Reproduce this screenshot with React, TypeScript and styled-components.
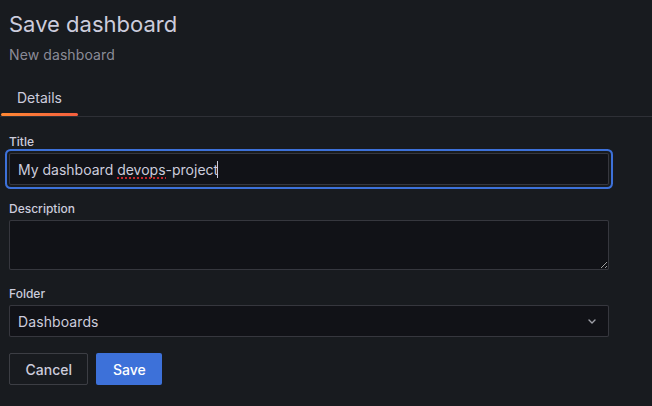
import React from "react";
import styled, { createGlobalStyle } from "styled-components";

const GlobalStyle = createGlobalStyle`
  html, body {
    margin: 0;
    padding: 0;
    background: #181b1f;
  }
  body {
    font-family: Inter, "Noto Sans", "Liberation Sans", sans-serif;
    color: #ccccdc;
    -webkit-font-smoothing: antialiased;
  }
  * { box-sizing: border-box; }
`;

const Page = styled.div`
  width: 652px;
  height: 406px;
  background: #181b1f;
  overflow: hidden;
`;

const Header = styled.header`
  padding: 10px 9px 0 9px;
`;

const Title = styled.h3`
  margin: 0;
  font-size: 22px;
  line-height: 29px;
  font-weight: 400;
  color: #ccccdc;
`;

const Subtitle = styled.div`
  margin-top: 5px;
  font-size: 14px;
  line-height: 21px;
  letter-spacing: 0.1px;
  color: rgba(204, 204, 220, 0.65);
`;

const TabBar = styled.div`
  margin-top: 12px;
  display: flex;
  padding-left: 1px;
  height: 40px;
  border-bottom: 1px solid rgba(204, 204, 220, 0.12);
`;

const Tab = styled.div<{ $active?: boolean }>`
  position: relative;
  padding: 3px 16px 0 16px;
  display: flex;
  align-items: center;
  font-size: 14px;
  line-height: 20px;
  color: ${(p) => (p.$active ? "#ccccdc" : "rgba(204, 204, 220, 0.65)")};

  &::after {
    content: "";
    display: ${(p) => (p.$active ? "block" : "none")};
    position: absolute;
    left: 0;
    right: 0;
    bottom: 0;
    height: 3px;
    border-radius: 2px;
    background: linear-gradient(90deg, #ff8833 0%, #f55f3e 100%);
  }
`;

const Form = styled.form`
  padding: 17px 9px 0 9px;
  width: 618px;
`;

const Field = styled.div`
  margin-bottom: 16px;
`;

const Label = styled.label`
  display: block;
  font-size: 12px;
  line-height: 15px;
  font-weight: 500;
  color: #ccccdc;
  margin-bottom: 4px;
`;

const InputWrap = styled.div`
  position: relative;
  width: 600px;
`;

const TextInput = styled.input<{ $focused?: boolean }>`
  display: block;
  width: 600px;
  height: 32px;
  padding: 0 8px;
  background: #111217;
  border: 1px solid rgba(204, 204, 220, 0.2);
  border-radius: 2px;
  color: #ccccdc;
  font-family: inherit;
  font-size: 14px;
  outline: none;
  box-shadow: ${(p) =>
    p.$focused ? "0 0 0 2px #181b1f, 0 0 0 4px #3d71d9" : "none"};
`;

const Squiggle = styled.span`
  position: absolute;
  left: 108px;
  top: 24px;
  width: 49px;
  height: 2px;
  background: repeating-linear-gradient(
    90deg,
    #c4262b 0 2px,
    transparent 2px 4px
  );
`;

const Caret = styled.span`
  position: absolute;
  left: 208px;
  top: 8px;
  width: 1px;
  height: 17px;
  background: #ccccdc;
`;

const TextArea = styled.textarea`
  display: block;
  width: 600px;
  height: 50px;
  padding: 4px 8px;
  background: #111217;
  border: 1px solid rgba(204, 204, 220, 0.2);
  border-radius: 2px;
  color: #ccccdc;
  font-family: inherit;
  font-size: 14px;
  outline: none;
`;

const Select = styled.div`
  display: flex;
  align-items: center;
  width: 600px;
  height: 32px;
  padding: 0 8px;
  background: #111217;
  border: 1px solid rgba(204, 204, 220, 0.2);
  border-radius: 2px;
  font-size: 14px;
  letter-spacing: 0.1px;
  color: #ccccdc;
`;

const SelectValue = styled.span`
  flex: 1;
`;

const Indicator = styled.span`
  display: flex;
  width: 16px;
  height: 16px;
  padding-top: 1px;
  align-items: center;
  justify-content: center;
  color: #9fa0a8;
`;

const Actions = styled.div`
  display: flex;
  gap: 8px;
`;

const Button = styled.button<{ $variant: "primary" | "secondary" }>`
  height: 32px;
  padding: 0 15.5px;
  font-family: inherit;
  font-size: 14px;
  font-weight: 500;
  border-radius: 2px;
  cursor: pointer;
  border: 1px solid
    ${(p) => (p.$variant === "primary" ? "transparent" : "rgba(204, 204, 220, 0.2)")};
  background: ${(p) => (p.$variant === "primary" ? "#3d71d9" : "transparent")};
  color: ${(p) => (p.$variant === "primary" ? "#ffffff" : "#ccccdc")};
`;

export default function App() {
  return (
    <Page>
      <GlobalStyle />
      <Header>
        <Title>Save dashboard</Title>
        <Subtitle>New dashboard</Subtitle>
      </Header>
      <TabBar>
        <Tab $active>Details</Tab>
      </TabBar>
      <Form onSubmit={(e) => e.preventDefault()}>
        <Field>
          <Label>Title</Label>
          <InputWrap>
            <TextInput
              $focused
              spellCheck={false}
              defaultValue="My dashboard devops-project"
            />
            <Squiggle />
            <Caret />
          </InputWrap>
        </Field>
        <Field>
          <Label>Description</Label>
          <TextArea spellCheck={false} />
        </Field>
        <Field>
          <Label>Folder</Label>
          <Select>
            <SelectValue>Dashboards</SelectValue>
            <Indicator>
              <svg width="8" height="5" viewBox="0 0 8 5" fill="none">
                <path
                  d="M1 1l3 3 3-3"
                  stroke="currentColor"
                  strokeWidth="1.4"
                  strokeLinecap="round"
                  strokeLinejoin="round"
                />
              </svg>
            </Indicator>
          </Select>
        </Field>
        <Actions>
          <Button type="button" $variant="secondary">
            Cancel
          </Button>
          <Button type="submit" $variant="primary">
            Save
          </Button>
        </Actions>
      </Form>
    </Page>
  );
}
